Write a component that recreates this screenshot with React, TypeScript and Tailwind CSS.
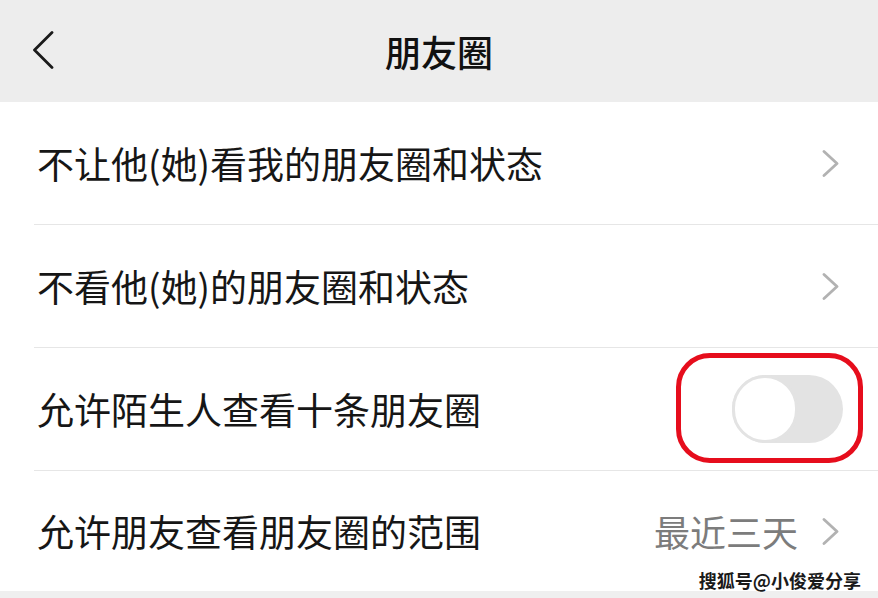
import React from "react";

const font = { fontFamily: '"Noto Sans CJK SC", "Noto Sans", sans-serif' };

function Chevron() {
  return (
    <svg width="17" height="27" viewBox="0 0 17 27" fill="none">
      <path d="M2 1.5 L15 13.5 L2 25.5" stroke="#b2b2b2" strokeWidth="2.8" strokeLinecap="round" strokeLinejoin="round" />
    </svg>
  );
}

function Row({ children, last }: { children: React.ReactNode; last?: boolean }) {
  return (
    <div
      className={
        "ml-[34px] pl-[3px] flex items-center justify-between " +
        (last ? "h-[120px]" : "h-[123px] border-b border-[#e6e6e6]")
      }
    >
      {children}
    </div>
  );
}

export default function App() {
  return (
    <div className="w-[878px] h-[598px] bg-[#efefef] relative overflow-hidden" style={font}>
      <div className="h-[102px] bg-[#ededed] relative flex items-center justify-center">
        <div className="absolute left-[32px] top-[31px]">
          <svg width="22" height="38" viewBox="0 0 22 38" fill="none">
            <path d="M20 1.5 L2.5 19 L20 36.5" stroke="#1a1a1a" strokeWidth="2.8" strokeLinecap="round" strokeLinejoin="round" />
          </svg>
        </div>
        <div className="text-[36px] font-medium text-[#111111] leading-none tracking-[0px]">朋友圈</div>
      </div>
      <div className="bg-white">
        <Row>
          <span className="text-[37px] text-[#161616] leading-none">不让他(她)看我的朋友圈和状态</span>
          <div className="pr-[39px] flex items-center">
            <Chevron />
          </div>
        </Row>
        <Row>
          <span className="text-[37px] text-[#161616] leading-none">不看他(她)的朋友圈和状态</span>
          <div className="pr-[39px] flex items-center">
            <Chevron />
          </div>
        </Row>
        <Row>
          <span className="text-[37px] text-[#161616] leading-none">允许陌生人查看十条朋友圈</span>
          <div className="pr-[35px] flex items-center">
            <div className="relative w-[111px] h-[68px]">
              <div className="w-[111px] h-[68px] rounded-full bg-[#e3e3e3] relative">
                <div className="absolute left-0 top-0 w-[66px] h-[68px] rounded-full bg-white border-[3px] border-[#e3e3e3]" />
              </div>
              <div className="absolute left-[-56px] right-[-20px] top-[-22px] bottom-[-20px] rounded-[34px] border-[5px] border-[#e60d1c]" />
            </div>
          </div>
        </Row>
        <Row last>
          <span className="text-[37px] text-[#161616] leading-none">允许朋友查看朋友圈的范围</span>
          <div className="pr-[39px] flex items-center gap-[24px]">
            <span className="text-[36px] text-[#7c7c7c] leading-none">最近三天</span>
            <Chevron />
          </div>
        </Row>
      </div>
      <div
        className="absolute right-[17px] bottom-[9px] text-[18px] font-bold text-[#1a1a1a] leading-none [text-shadow:0_0_2px_#fff,0_0_2px_#fff]"
      >
        搜狐号@小俊爱分享
      </div>
    </div>
  );
}
